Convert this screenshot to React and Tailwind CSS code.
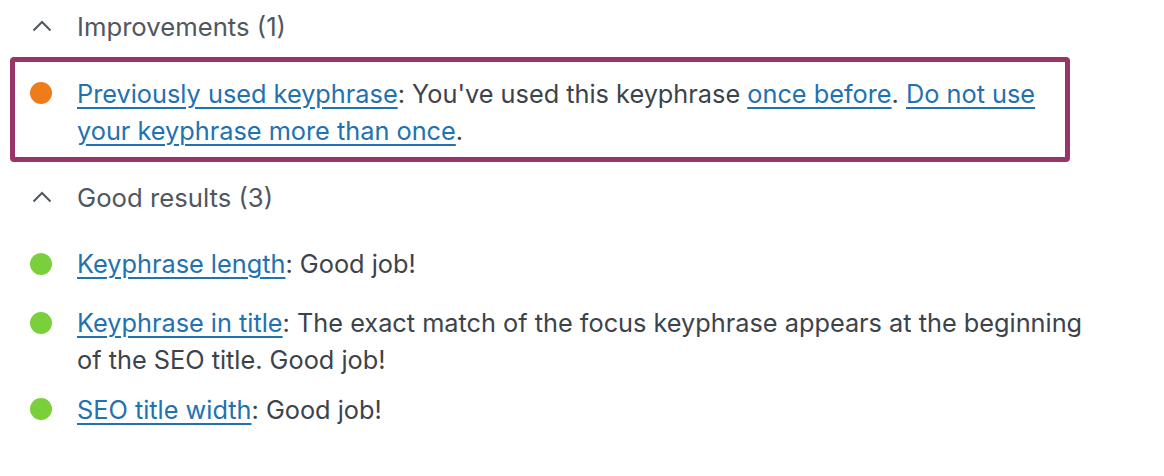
import React from "react";

const Chevron = () => (
  <svg width="20" height="12" viewBox="0 0 20 12" className="shrink-0">
    <path d="M1.5 10.5 L10 2 L18.5 10.5" fill="none" stroke="#50575e" strokeWidth="2" />
  </svg>
);

const Dot = ({ color }) => (
  <span className={`mt-[7.5px] h-[22px] w-[22px] shrink-0 rounded-full ${color}`} />
);

const A = ({ children }) => (
  <a href="#" className="text-[#2271b1] underline decoration-[1.5px] underline-offset-[4px]">
    {children}
  </a>
);

export default function App() {
  return (
    <div
      className="w-[1164px] h-[476px] bg-white pl-[10px] pt-[7.5px] text-[25.3px] leading-[37px] text-[#3c434a]"
      style={{ fontFamily: "Inter, 'Liberation Sans', sans-serif" }}
    >
      <div className="flex items-center gap-[25px] pl-[22px] text-[25.7px] text-[#50575e]">
        <Chevron />
        <span>Improvements (1)</span>
      </div>
      <div className="mt-[12.5px] w-[1060px] rounded-[4px] border-[5px] border-[#99346b] pl-[15px] pr-[8px] pt-[12.5px] pb-[8.5px]">
        <div className="flex gap-[25px]">
          <Dot color="bg-[#ee7c1b]" />
          <p>
            <A>Previously used keyphrase</A>: You've used this keyphrase <A>once before</A>.{" "}
            <A>Do not use your keyphrase more than once</A>.
          </p>
        </div>
      </div>
      <div className="mt-[16.5px] flex items-center gap-[25px] pl-[22px] text-[25.7px] text-[#50575e]">
        <Chevron />
        <span>Good results (3)</span>
      </div>
      <div className="mt-[29.5px] w-[1100px] pl-[20px]">
        <div className="flex gap-[25px]">
          <Dot color="bg-[#7ad03a]" />
          <p>
            <A>Keyphrase length</A>: Good job!
          </p>
        </div>
        <div className="mt-[22px] flex gap-[25px]">
          <Dot color="bg-[#7ad03a]" />
          <p>
            <A>Keyphrase in title</A>: The exact match of the focus keyphrase appears at the beginning
            of the SEO title. Good job!
          </p>
        </div>
        <div className="mt-[12.5px] flex gap-[25px]">
          <Dot color="bg-[#7ad03a]" />
          <p>
            <A>SEO title width</A>: Good job!
          </p>
        </div>
      </div>
    </div>
  );
}
